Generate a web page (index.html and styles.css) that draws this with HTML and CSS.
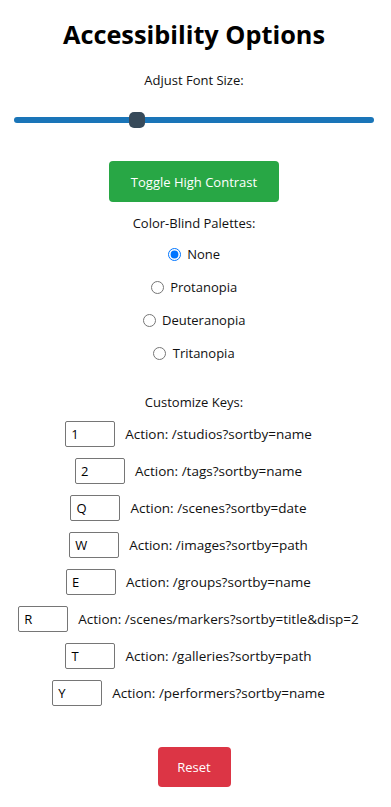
FILE: index.html
```html
<!doctype html>
<html lang="en">
  <head>
    <meta charset="utf-8">
    <meta name="viewport" content="width=device-width, initial-scale=1">
    <title>Accessibility Options</title>
    <link rel="stylesheet" href="styles.css">
  </head>
  <body>
    <main class="panel">
      <h1 class="title">Accessibility Options</h1>

      <label class="caption" for="font-size">Adjust Font Size:</label>
      <input class="slider" id="font-size" type="range" min="12" max="24" value="16">

      <button class="btn btn-green">Toggle High Contrast</button>

      <div class="caption">Color-Blind Palettes:</div>
      <div class="radios">
        <label class="radio"><input type="radio" name="palette" value="none" checked> None</label>
        <label class="radio"><input type="radio" name="palette" value="protanopia"> Protanopia</label>
        <label class="radio"><input type="radio" name="palette" value="deuteranopia"> Deuteranopia</label>
        <label class="radio"><input type="radio" name="palette" value="tritanopia"> Tritanopia</label>
      </div>

      <div class="caption caption-keys">Customize Keys:</div>
      <div class="keys">
        <div class="key-row"><input class="key" type="text" value="1"><span class="action">Action: /studios?sortby=name</span></div>
        <div class="key-row"><input class="key" type="text" value="2"><span class="action">Action: /tags?sortby=name</span></div>
        <div class="key-row"><input class="key" type="text" value="Q"><span class="action">Action: /scenes?sortby=date</span></div>
        <div class="key-row"><input class="key" type="text" value="W"><span class="action">Action: /images?sortby=path</span></div>
        <div class="key-row"><input class="key" type="text" value="E"><span class="action">Action: /groups?sortby=name</span></div>
        <div class="key-row"><input class="key" type="text" value="R"><span class="action">Action: /scenes/markers?sortby=title&amp;disp=2</span></div>
        <div class="key-row"><input class="key" type="text" value="T"><span class="action">Action: /galleries?sortby=path</span></div>
        <div class="key-row"><input class="key" type="text" value="Y"><span class="action">Action: /performers?sortby=name</span></div>
      </div>

      <button class="btn btn-red">Reset</button>
    </main>
  </body>
</html>
```

FILE: styles.css
```css
body {
  margin: 0;
  font-family: "Open Sans", "Noto Sans", sans-serif;
  font-size: 13px;
  color: #111;
  background: white;
}
.panel {
  display: flex;
  flex-direction: column;
  align-items: center;
  padding-right: 3px;
  text-align: center;
}
.title {
  margin: 17px 0 0;
  font-size: 25.3px;
  line-height: 34px;
  font-weight: 700;
  color: #000;
}
.caption {
  display: block;
  line-height: 20px;
  margin-top: 19px;
}
.slider {
  -webkit-appearance: none;
  appearance: none;
  width: 360px;
  height: 16px;
  margin: 22px 0 0;
  background: transparent;
}
.slider::-webkit-slider-runnable-track {
  height: 6px;
  border-radius: 3px;
  background: #1a75b8;
}
.slider::-webkit-slider-thumb {
  -webkit-appearance: none;
  width: 16px;
  height: 16px;
  margin-top: -5px;
  border-radius: 5px;
  background: #374a5a;
}
.btn {
  border: none;
  border-radius: 4px;
  color: white;
  font-family: inherit;
  font-size: 13px;
  cursor: pointer;
}
.btn-green {
  margin-top: 33px;
  width: 170px;
  height: 41px;
  background: #28a745;
}
.btn-green + .caption {
  margin-top: 11px;
}
.radios {
  display: flex;
  flex-direction: column;
  align-items: center;
  gap: 13px;
  margin-top: 11px;
}
.radio {
  line-height: 20px;
}
.radio input {
  margin: 0 3px 0 0;
  vertical-align: -2px;
}
.caption-keys {
  margin-top: 29px;
}
.keys {
  display: flex;
  flex-direction: column;
  align-items: center;
  gap: 11px;
  margin-top: 9px;
}
.key-row {
  display: flex;
  align-items: center;
}
.key {
  width: 50px;
  height: 26px;
  box-sizing: border-box;
  padding: 0 5px;
  border: 1px solid #767676;
  border-radius: 2px;
  font-family: inherit;
  font-size: 13px;
  color: #000;
}
.action {
  margin: 0 11px 0 10px;
  font-size: 13.5px;
}
.btn-red {
  margin: 41px 0 20px;
  width: 73px;
  height: 40px;
  background: #dc3545;
}
```
